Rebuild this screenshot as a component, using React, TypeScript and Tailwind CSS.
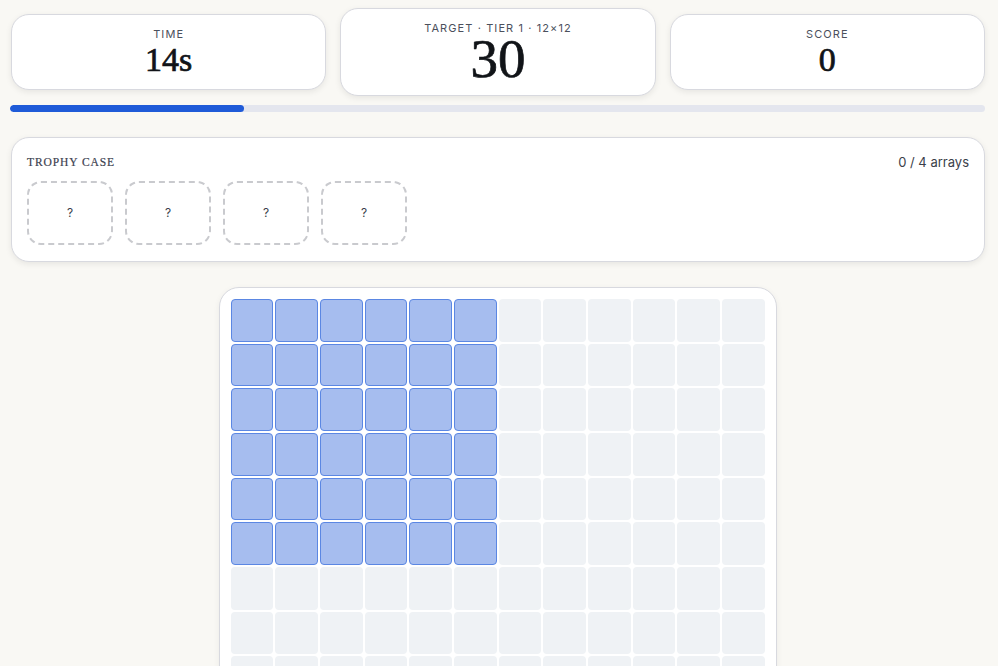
import React from "react";

const SANS = "font-['Inter','Liberation_Sans',sans-serif]";
const SERIF = "font-['Liberation_Serif','DejaVu_Serif',serif]";

function StatCard({ label, value, big }: { label: string; value: string; big?: boolean }) {
  return (
    <div
      className={`bg-white border border-[#d8d9df] rounded-[18px] shadow-[0_2px_6px_rgba(0,0,0,0.08)] flex flex-col items-center pt-[11px] ${
        big ? "pb-[13px]" : "pb-[11px]"
      }`}
    >
      <span className={`${SANS} text-[11px] leading-4 tracking-[0.1em] uppercase text-[#4b505c]`}>{label}</span>
      <span
        className={`${SERIF} font-normal text-[#111418] [-webkit-text-stroke:0.7px_#111418] ${
          big ? "text-[55px] leading-[46px]" : "text-[34px] leading-[36px]"
        }`}
      >
        {value}
      </span>
    </div>
  );
}

export default function App() {
  const size = 12;
  const filledCols = 6;
  const filledRows = 6;
  const elapsed = 24;

  const cells = [];
  for (let r = 0; r < size; r++) {
    for (let c = 0; c < size; c++) {
      const on = r < filledRows && c < filledCols;
      cells.push(
        <div
          key={`${r}-${c}`}
          className={`aspect-square rounded-[4px] ${
            on ? "bg-[#a6bdef] border border-[#5b87e3]" : "bg-[#eff2f5]"
          }`}
        />
      );
    }
  }

  return (
    <div className={`min-h-screen bg-[#f9f8f4] pl-[10px] pr-[13px] pt-2 pb-6 ${SANS}`}>
      {/* header stats */}
      <div className="grid grid-cols-3 gap-[14px] items-center pl-px">
        <StatCard label="Time" value="14s" />
        <StatCard label="Target · Tier 1 · 12×12" value="30" big />
        <StatCard label="Score" value="0" />
      </div>

      {/* timer bar */}
      <div className="mt-[9px] h-[7px] rounded-full bg-[#e4e6ee] overflow-hidden">
        <div className="h-full rounded-full bg-[#1f5bd8]" style={{ width: `${elapsed}%` }} />
      </div>

      {/* trophy case */}
      <div className="mt-[25px] ml-px bg-white border border-[#d8d9df] rounded-[18px] shadow-[0_2px_6px_rgba(0,0,0,0.08)] px-[15px] pt-4 pb-4">
        <div className="flex items-center justify-between">
          <span className={`${SERIF} text-[11.5px] leading-4 tracking-[0.08em] uppercase text-[#3c4150] [-webkit-text-stroke:0.2px_#3c4150]`}>
            Trophy Case
          </span>
          <span className="text-[13px] leading-4 text-[#3b3f4a]">0 / 4 arrays</span>
        </div>
        <div className="mt-[11px] flex gap-3">
          {[0, 1, 2, 3].map((i) => (
            <div
              key={i}
              className="w-[86px] h-[64px] rounded-[14px] border-2 border-dashed border-[#c9cace] flex items-center justify-center text-[12px] font-normal text-[#3a3f4b]"
            >
              ?
            </div>
          ))}
        </div>
      </div>

      {/* board */}
      <div className="mt-[25px] flex justify-center">
        <div className="w-[558px] bg-white border border-[#d8d9df] rounded-[20px] shadow-[0_2px_6px_rgba(0,0,0,0.06)] p-[11px]">
          <div className="grid grid-cols-12 gap-[2px]">{cells}</div>
        </div>
      </div>
    </div>
  );
}
